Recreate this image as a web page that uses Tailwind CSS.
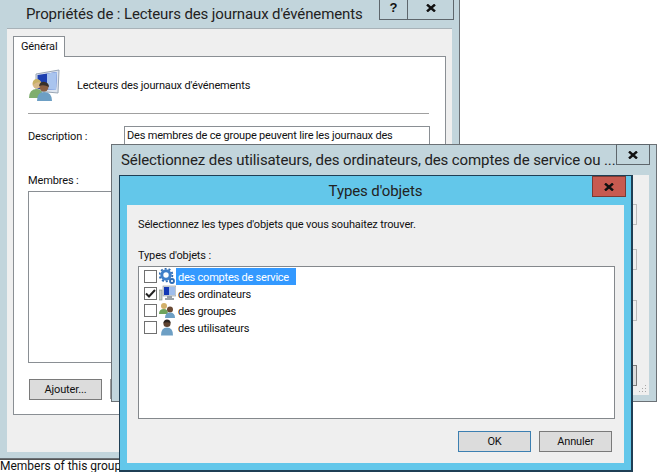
<!DOCTYPE html>
<html lang="fr">
<head>
<meta charset="UTF-8">
<title>Types d'objets</title>
<script src="https://cdn.jsdelivr.net/npm/@tailwindcss/browser@4"></script>
</head>
<body class="bg-white overflow-hidden">
<div class="relative w-[659px] h-[472px] overflow-hidden font-['Roboto',sans-serif] text-[11px] tracking-[-0.14px] text-[#111]">

  <!-- status line under the first window -->
  <div class="absolute left-0 top-[459px] h-[13px] border-t border-[#555] pr-[20px] text-[12px] tracking-normal leading-[12px] whitespace-nowrap">Members of this group</div>

  <!-- properties window -->
  <div class="absolute left-0 top-[-10px] w-[460px] h-[469px] bg-[#c2d5dc] border-r border-b border-[#6b7176] px-[7px] pt-[38px] pb-[6px]">
    <div class="absolute left-[26px] top-[13px] text-[15px] tracking-[-0.12px] leading-[22px] text-[#222] whitespace-nowrap">Propriétés de : Lecteurs des journaux d'événements</div>
    <div class="absolute left-[379px] top-0 w-[75px] h-[30px] flex border-x border-b border-[#5e666c] font-['Liberation_Sans',sans-serif]">
      <div class="w-[28px] pt-[10px] text-center font-bold text-[13px] leading-[15px] border-r border-[#5e666c]">?</div>
      <div class="flex-1 flex justify-center pt-[14px]">
        <svg width="10" height="8" viewBox="0 0 10 8"><path d="M1 0.5 L9 7.5 M9 0.5 L1 7.5" stroke="#111" stroke-width="2.4"/></svg>
      </div>
    </div>
    <div class="h-full bg-[#efefef] border-t border-[#a8b2b8] px-[6px] pt-[7px] pb-[37px] flex flex-col">
      <div class="w-[52px] h-[21px] -mb-px relative z-10 bg-white border border-b-0 border-[#8a8f94] pl-[7px] leading-[20px]">Général</div>
      <div class="flex-1 bg-white border border-[#8a8f94] relative px-[14px]">
        <div class="flex items-center h-[56px] pt-[1px]">
          <svg width="34" height="34" viewBox="0 0 34 34" class="shrink-0">
            <path d="M8 5 L31 1 L30 24 L8 22 Z" fill="#dfe6f0" stroke="#9aa6b4"/>
            <path d="M9.5 6 L29 3 L28 21 L9.5 20 Z" fill="#1c3fb0"/>
            <path d="M19 4.5 L29 3 L28 21 L19 20.5 Z" fill="#a9c4ee"/>
            <circle cx="9" cy="15" r="4.5" fill="#d7b98a"/>
            <path d="M8 10 Q4 11 5 16 Q9 12 13 14 Q12 10 8 10Z" fill="#c9b266"/>
            <path d="M1 29 Q1 20 9 20 Q15 20 15 29 Z" fill="#7fae6e"/>
            <circle cx="16" cy="18" r="4.5" fill="#8a5f42"/>
            <path d="M11 17 Q12 12 17 13 Q21 14 21 18 Q16 15 11 17Z" fill="#38302b"/>
            <path d="M9 32 Q9 23 16 23 Q24 23 24 32 Z" fill="#6d9fc4"/>
          </svg>
          <span class="ml-[15px] pt-[2px] whitespace-nowrap">Lecteurs des journaux d'événements</span>
        </div>
        <div class="h-px bg-[#a0a0a0] w-[401px]"></div>
        <div class="flex mt-[12px] h-[54px]">
          <span class="w-[96px] pt-[3px]">Description :</span>
          <div class="w-[306px] h-[30px] border border-[#8a8f94] pl-[2px] pt-[1px] tracking-[-0.18px] whitespace-nowrap overflow-hidden">Des membres de ce groupe peuvent lire les journaux des</div>
        </div>
        <div class="leading-[16px] h-[11px] -mt-[7px]">Membres :</div>
        <div class="mt-[7px] h-[172px] w-[300px] border border-[#8a8f94]"></div>
        <div class="mt-[16px] ml-[1px] w-[73px] h-[21px] bg-[#dcdcdc] border border-[#7a7a7a] text-center leading-[20px]">Ajouter...</div>
      </div>
    </div>
  </div>

  <!-- object picker window -->
  <div class="absolute left-[111px] top-[144px] w-[546px] h-[258px] bg-[#c2d5dc] border border-[#6b7176] pt-[30px] pl-[7px] pr-[7px] pb-[6px]">
    <div class="absolute left-[9px] top-[4px] text-[15px] tracking-[-0.1px] leading-[22px] text-[#222] whitespace-nowrap">Sélectionnez des utilisateurs, des ordinateurs, des comptes de service ou ...</div>
    <div class="absolute left-[504px] top-[-1px] w-[34px] h-[21px] border border-[#5e666c] flex justify-center pt-[6px]">
      <svg width="10" height="8" viewBox="0 0 10 8"><path d="M1 0.5 L9 7.5 M9 0.5 L1 7.5" stroke="#111" stroke-width="2.4"/></svg>
    </div>
    <div class="relative h-full bg-[#efefef]">
      <div class="absolute left-[513px] top-[29px] w-[5px] h-[21px] border border-l-0 border-[#bcbcbc]"></div>
      <div class="absolute left-[513px] top-[74px] w-[5px] h-[21px] border border-l-0 border-[#bcbcbc]"></div>
      <div class="absolute left-[513px] top-[125px] w-[5px] h-[21px] border border-l-0 border-[#bcbcbc]"></div>
      <div class="absolute left-[513px] top-[190px] w-[5px] h-[21px] border border-l-0 border-[#7a7a7a] bg-[#dcdcdc]"></div>
      <svg class="absolute right-[2px] bottom-[2px]" width="9" height="9" viewBox="0 0 9 9" fill="#a8a8a8"><rect x="7" y="1" width="1" height="1"/><rect x="7" y="4" width="1" height="1"/><rect x="4" y="4" width="1" height="1"/><rect x="7" y="7" width="1" height="1"/><rect x="4" y="7" width="1" height="1"/><rect x="1" y="7" width="1" height="1"/></svg>
    </div>
  </div>
  <div class="absolute left-[110px] top-[379px] w-px h-[20px] bg-[#9a9a9a]"></div>

  <!-- object types dialog -->
  <div class="absolute left-[119px] top-[175px] w-[514px] h-[297px] bg-[#63c7ea] border border-[#1f3f55] border-r-2 border-b-2 pt-[29px] px-[7px] pb-[7px]">
    <div class="absolute left-0 right-0 top-[4px] text-center text-[15px] tracking-[-0.1px] leading-[22px] text-[#222]">Types d'objets</div>
    <div class="absolute left-[472px] top-0 w-[34px] h-[21px] bg-[#c75a50] border border-[#7a3a34] flex justify-center pt-[6px]">
      <svg width="10" height="8" viewBox="0 0 10 8"><path d="M1 0.5 L9 7.5 M9 0.5 L1 7.5" stroke="#111" stroke-width="2.4"/></svg>
    </div>
    <div class="h-full bg-[#efefef] px-[11px] pt-[11px] flex flex-col">
      <div class="leading-[18px]">Sélectionnez les types d'objets que vous souhaitez trouver.</div>
      <div class="leading-[18px] mt-[13px]">Types d'objets :</div>
      <div class="mt-[1px] w-[477px] h-[153px] bg-white border border-[#84888c] pt-[1px] pl-[5px] flex flex-col tracking-[-0.22px]">

        <div class="h-[17px] flex items-center">
          <span class="w-[13px] h-[13px] border border-[#707070] bg-white shrink-0"></span>
          <svg width="17" height="17" viewBox="0 0 17 17" class="ml-[2px] shrink-0">
            <circle cx="7" cy="7" r="4.2" fill="none" stroke="#3f7fc9" stroke-width="3"/>
            <circle cx="7" cy="7" r="6.4" fill="none" stroke="#2f6db5" stroke-width="1.8" stroke-dasharray="2 2"/>
            <circle cx="13" cy="13" r="2" fill="#fff" stroke="#2f6db5" stroke-width="1.8"/>
          </svg>
          <span class="bg-[#3399ff] text-white h-[17px] w-[120px] pl-[2px] pt-[1px] leading-[17px] whitespace-nowrap">des comptes de service</span>
        </div>

        <div class="h-[17px] flex items-center">
          <span class="w-[13px] h-[13px] border border-[#707070] bg-white shrink-0 flex items-center justify-center">
            <svg width="11" height="9" viewBox="0 0 11 9"><path d="M1 4.5 L4 7.5 L10 1" fill="none" stroke="#222" stroke-width="2"/></svg>
          </span>
          <svg width="17" height="17" viewBox="0 0 17 17" class="ml-[2px] shrink-0">
            <rect x="0" y="5" width="3" height="10" fill="#c9cfc9" stroke="#7c8a7c" stroke-width=".6"/>
            <rect x="4" y="1" width="13" height="10" fill="#d8dde2" stroke="#8b939b" stroke-width=".6"/>
            <rect x="5" y="2" width="11" height="8" fill="#1338b5"/>
            <rect x="10" y="2" width="6" height="8" fill="#9fbdeb"/>
            <path d="M8 11 H13 V13 H15 V15 H6 V13 H8 Z" fill="#9aa2a8"/>
          </svg>
          <span class="ml-[2px] pt-[1px] leading-[17px] whitespace-nowrap">des ordinateurs</span>
        </div>

        <div class="h-[17px] flex items-center">
          <span class="w-[13px] h-[13px] border border-[#707070] bg-white shrink-0"></span>
          <svg width="17" height="17" viewBox="0 0 17 17" class="ml-[2px] shrink-0">
            <circle cx="5" cy="4" r="3" fill="#d2b06a"/>
            <path d="M0 12 Q0 7 5 7 Q9 7 9 12 Z" fill="#6fa35c"/>
            <circle cx="11" cy="7.5" r="3" fill="#6b4a33"/>
            <path d="M6 16 Q6 10.5 11 10.5 Q16 10.5 16 16 Z" fill="#6d9fc4"/>
          </svg>
          <span class="ml-[2px] pt-[1px] leading-[17px] whitespace-nowrap">des groupes</span>
        </div>

        <div class="h-[17px] flex items-center">
          <span class="w-[13px] h-[13px] border border-[#707070] bg-white shrink-0"></span>
          <svg width="17" height="17" viewBox="0 0 17 17" class="ml-[2px] shrink-0">
            <circle cx="8" cy="4.5" r="3.6" fill="#5f4330"/>
            <path d="M4.5 4 Q5 0.5 8 0.5 Q11.5 0.5 11.5 4 Q8 2.5 4.5 4Z" fill="#2b2420"/>
            <path d="M2 16.5 Q2 8.5 8 8.5 Q14 8.5 14 16.5 Z" fill="#6d9fc4"/>
          </svg>
          <span class="ml-[2px] pt-[1px] leading-[17px] whitespace-nowrap">des utilisateurs</span>
        </div>
      </div>
      <div class="flex justify-end gap-[8px] mt-[12px] pr-[1px]">
        <div class="w-[73px] h-[21px] bg-[#dcdcdc] border border-[#3c7fb1] text-center leading-[20px]">OK</div>
        <div class="w-[73px] h-[21px] bg-[#dcdcdc] border border-[#7a7a7a] text-center leading-[20px]">Annuler</div>
      </div>
    </div>
  </div>
</div>
</body>
</html>
